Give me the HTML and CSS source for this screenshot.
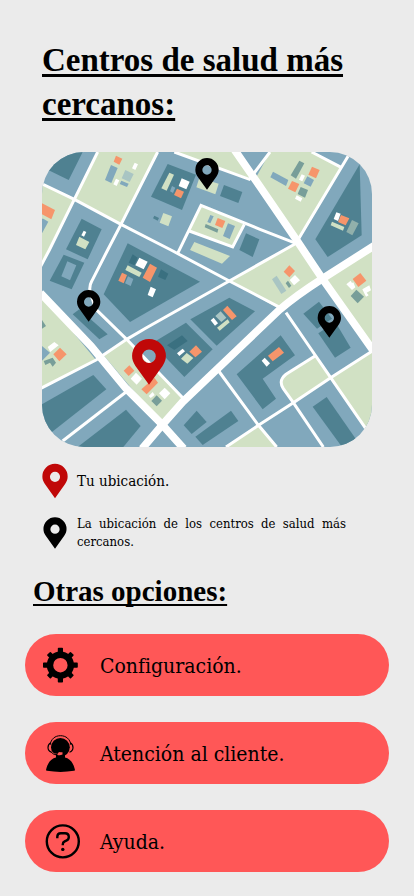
FILE: index.html
```html
<!DOCTYPE html>
<html lang="es">
<head>
<meta charset="utf-8">
<meta name="viewport" content="width=device-width, initial-scale=1">
<title>Centros de salud</title>
<link rel="stylesheet" href="styles.css">
</head>
<body>
<main class="screen">
  <section class="nearby">
    <h1 class="title">Centros de salud más cercanos:</h1>

    <svg class="map" viewBox="0 0 990 885" role="img" aria-label="Mapa de centros de salud cercanos">
      <defs>
        <path id="pin" fill-rule="evenodd" d="M0 59L-28 20C-33 12-35 7-35-1A35 35 0 0 1 35-1C35 7 33 12 28 20ZM0-14A14 14 0 1 0 0 14A14 14 0 1 0 0-14Z"/>
      </defs>
      <rect class="block" width="990" height="885"/>

      <!-- parks -->
      <g class="park">
        <path d="M167 0H347L237 217L97 142Z"/>
        <path d="M0 95L97 142L22 294L0 337Z"/>
        <path d="M397 0H580L625 80Z"/>
        <path d="M684 0H809L899 47L769 262L640 80Z"/>
        <path d="M477 160L607 217L572 285L442 237Z"/>
        <path d="M562 387L764 275L841 382L714 472Z"/>
        <path d="M841 382L990 285V600Z"/>
        <path d="M0 429L162 624L0 707Z"/>
        <path d="M182 607L254 562L422 737L360 817Z"/>
        <path d="M819 612L739 662Q706 682 724 710L754 752L866 677Z"/>
        <path d="M990 598L866 677L969 827L990 855Z"/>
        <path d="M552 885L647 817L704 885Z"/>
      </g>

      <!-- buildings -->
      <g class="dark">
        <path d="M20 55L80 84L122 0H60Z"/>
        <path d="M119 200L179 232L137 322L72 292Z"/>
        <path d="M257 274L474 389L264 510L185 427Z"/>
        <path d="M377 36L462 68L420 174L327 134Z"/>
        <path d="M546 99L601 120L589 153L534 132Z"/>
        <path d="M337 191L351 198L347 206L333 199Z"/>
        <path d="M612 244L652 262L632 315L592 294Z"/>
        <path d="M953 37L959 250L857 315L820 262Z"/>
        <path d="M65 308L127 332L89 412L23 386Z"/>
        <path d="M92 487L112 472L197 547L172 562Z"/>
        <path d="M562 437L639 478L524 581L445 502Z"/>
        <path d="M432 512L512 592L427 675L330 574Z"/>
        <path d="M831 449L870 500L825 530L784 485Z"/>
        <path d="M829 544L880 510L926 587L879 617Z"/>
        <path d="M716 550L759 610L662 680L702 740L662 772L584 667Z"/>
        <path d="M854 735L941 860L900 885L812 764Z"/>
        <path d="M154 669L193 712L27 842L0 800V757Z"/>
        <path d="M252 773L296 822L244 885H107Z"/>
        <path d="M464 776L494 810L449 846L425 820Z"/>
        <path d="M567 776L589 807L482 879L460 854Z"/>
      </g>
      <g class="deep">
        <path d="M272 307L287 317L277 340L260 332Z"/>
        <path d="M357 352L379 365L370 384L348 374Z"/>
        <path d="M420 550L437 567L397 594L375 580Z"/>
      </g>
      <g class="block">
        <path d="M207 39L227 48L208 93L189 84Z"/>
        <path d="M238 86L260 95L255 105L233 96Z"/>
        <path d="M4 200L19 209L0 244V200Z"/>
        <path d="M390 102L400 107L393 123L384 118Z"/>
        <path d="M505 189L515 193L505 214L496 210Z"/>
        <path d="M558 214L579 222L563 261L543 252Z"/>
        <path d="M796 73L816 84L806 104L785 94Z"/>
        <path d="M693 59L739 84L732 102L685 76Z"/>
        <path d="M76 328L103 340L84 385L58 373Z"/>
        <path d="M258 373L274 381L266 402L249 394Z"/>
        <path d="M0 582L24 602L0 626Z"/>
      </g>
      <g class="teal">
        <path d="M491 216L529 232L526 242L488 226Z"/>
        <path d="M772 26L787 34L762 80L746 70Z"/>
        <path d="M776 105L798 114L789 137L767 126Z"/>
        <path d="M738 386L748 401L741 408L731 394Z"/>
        <path d="M943 413L966 434L947 454L926 432Z"/>
        <path d="M5 627L32 617L42 632L32 644L24 632L10 639Z"/>
        <path d="M0 504L12 522L0 530Z"/>
        <path d="M344 730L360 746L344 763L328 747Z"/>
      </g>
      <g class="mist">
        <path d="M250 54L275 66L263 90L239 79Z"/>
        <path d="M704 371L733 416L718 426L690 382Z"/>
        <path d="M536 478L553 497L538 510L520 492Z"/>
      </g>
      <path class="sage" d="M930 204L950 214L931 250L913 240Z"/>
      <g class="park">
        <path d="M112 254L142 270L130 292L102 279Z"/>
        <path d="M382 62L396 68L374 116L358 109Z"/>
        <path d="M472 77L530 95L520 127L463 106Z"/>
        <path d="M364 183L390 193L379 223L353 212Z"/>
        <path d="M457 270L564 312L540 335L444 294Z"/>
        <path d="M870 209L907 225L903 236L866 220Z"/>
        <path d="M257 340L299 362L292 375L250 354Z"/>
        <path d="M557 502L563 511L533 536L525 527Z"/>
        <path d="M434 603L454 618L436 635L417 620Z"/>
      </g>
      <g class="orange">
        <path d="M222 11L241 20L232 38L215 29Z"/>
        <path d="M0 154L39 174L28 202L0 187Z"/>
        <path d="M405 110L426 119L417 139L396 129Z"/>
        <path d="M527 198L550 207L541 228L519 219Z"/>
        <path d="M810 44L833 54L822 79L799 68Z"/>
        <path d="M750 87L772 96L760 121L738 110Z"/>
        <path d="M897 189L922 199L911 220L888 210Z"/>
        <path d="M240 362L255 369L245 394L229 386Z"/>
        <path d="M324 335L345 347L324 390L302 377Z"/>
        <path d="M556 461L584 493L570 504L543 474Z"/>
        <path d="M462 580L480 599L460 616L442 599Z"/>
        <path d="M742 340L759 357L742 376L725 359Z"/>
        <path d="M955 363L973 386L949 405L932 381Z"/>
        <path d="M711 585L726 602L692 628L678 611Z"/>
        <path d="M54 587L74 607L52 628L34 607Z"/>
        <path d="M262 640L277 656L260 672L245 656Z"/>
        <path d="M337 677L348 692L314 727L298 712Z"/>
      </g>
      <g class="white">
        <path d="M278 32L288 37L280 54L270 49Z"/>
        <path d="M222 80L232 85L224 102L214 97Z"/>
        <path d="M125 236L133 240L126 254L118 250Z"/>
        <path d="M419 79L443 89L433 112L410 102Z"/>
        <path d="M779 67L789 71L781 88L771 83Z"/>
        <path d="M764 130L781 139L776 149L759 140Z"/>
        <path d="M883 181L896 185L888 207L875 201Z"/>
        <path d="M292 317L317 329L305 352L280 340Z"/>
        <path d="M326 404L342 412L332 436L317 429Z"/>
        <path d="M515 497L528 514L519 521L506 505Z"/>
        <path d="M422 590L429 598L412 612L405 604Z"/>
        <path d="M759 369L774 385L756 400L743 384Z"/>
        <path d="M926 386L930 393L934 391L940 406L930 414L913 397Z"/>
        <path d="M982 400L987 415L974 422L980 430L972 434L961 412Z"/>
        <path d="M668 617L684 634L674 644L659 626Z"/>
        <path d="M37 570L50 580L32 594L25 600L17 585Z"/>
        <path d="M282 662L300 680L284 698L266 680Z"/>
        <path d="M368 707L385 724L368 742L351 724Z"/>
        <path d="M332 720L338 729L326 738L320 732Z"/>
      </g>

      <!-- streets -->
      <g class="street">
        <path d="M-5 93L97 142L237 217L387 294L562 387L719 469"/>
        <path d="M167 0L97 142L22 294L-5 345"/>
        <path d="M347 0L237 217L197 294L149 388Q138 408 148 432L162 472L254 562L422 737"/>
        <path d="M397 0L622 82L684 0"/>
        <path d="M407 304L442 232L477 160L654 232L764 275"/>
        <path d="M442 237L572 285L607 217"/>
        <path d="M-5 710L162 624L254 562L312 528L562 387L654 335L764 273"/>
        <path d="M62 867L252 720"/>
        <path d="M732 482L809 594L866 677L975 835"/>
        <path d="M990 598L866 677L754 752L654 817L552 885"/>
        <path d="M530 657L647 817L704 885"/>
        <path d="M819 612L739 662Q706 682 724 710L754 752L844 885"/>
        <path d="M809 0L899 47M924 3L769 262"/>
      </g>
      <g class="avenue">
        <path d="M578-6L654 104L769 272L841 380L995 598"/>
        <path d="M1000 279L841 380Q760 432 714 472L654 529L592 588L422 750L360 820L300 890"/>
        <path d="M-5 423L147 582L252 709L360 817L425 890"/>
      </g>

      <!-- markers -->
      <use href="#pin" transform="translate(495 54)"/>
      <use href="#pin" transform="translate(140 450)"/>
      <use href="#pin" transform="translate(862 498)"/>
      <use class="here" href="#pin" transform="translate(321 613) scale(1.45)"/>
    </svg>

    <ul class="legend">
      <li class="legend-item">
        <svg class="legend-pin here" viewBox="-36 -37 72 97" aria-hidden="true"><use href="#pin"/></svg>
        <span class="legend-main">Tu ubicación.</span>
      </li>
      <li class="legend-item">
        <svg class="legend-pin small" viewBox="-36 -37 72 97" aria-hidden="true"><use href="#pin"/></svg>
        <span class="legend-note">La ubicación de los centros de salud más cercanos.</span>
      </li>
    </ul>
  </section>

  <section class="options">
    <h2 class="subtitle">Otras opciones:</h2>
    <nav class="menu">
      <button class="option" type="button">
        <svg class="icon" viewBox="0 0 40 40" aria-hidden="true">
          <g transform="translate(19.4 20.2)">
            <circle r="10.4" fill="none" stroke="#000" stroke-width="6.4"/>
            <path id="teeth" d="M-2.6-12V-16.6Q-2.6-17.4-1.8-17.4H1.8Q2.6-17.4 2.6-16.6V-12ZM-2.6 12V16.6Q-2.6 17.4-1.8 17.4H1.8Q2.6 17.4 2.6 16.6V12ZM-12-2.6H-16.6Q-17.4-2.6-17.4-1.8V1.8Q-17.4 2.6-16.6 2.6H-12ZM12-2.6H16.6Q17.4-2.6 17.4-1.8V1.8Q17.4 2.6 16.6 2.6H12Z"/>
            <use href="#teeth" transform="rotate(45) scale(.96)"/>
          </g>
        </svg>
        <span class="option-label">Configuración.</span>
      </button>
      <button class="option" type="button">
        <svg class="icon" viewBox="0 0 40 40" aria-hidden="true">
          <circle cx="19.4" cy="14.3" r="9.4"/>
          <path d="M15 21H24V24.5C29 25.5 32.5 30 34 37Q34 37.6 33 37.8Q19.5 40 6 37.8Q5 37.6 5 37C6.5 30 10 25.5 15 24.5Z"/>
          <path d="M9 12C10 6 14 2.7 19.5 2.7S29 6 30 12" fill="none" stroke="#000" stroke-width="1"/>
          <path d="M10 9.8Q7 11 7 14.6T10.5 19.3M29 9.8Q32 11 32 14.6T28.5 19.3" fill="none" stroke="#000" stroke-width="1.2"/>
          <path d="M11 18.5Q13 21.3 17 20.7Q16.5 19.5 18.5 19Q20.5 19.6 21.5 19.2V21.5Q19 22.8 16.5 22Q12.5 22 10.5 19Z" fill="#ff5757"/>
          <path d="M9.5 18.5Q12 22 16.5 21.7" fill="none" stroke="#000" stroke-width="1"/>
        </svg>
        <span class="option-label">Atención al cliente.</span>
      </button>
      <button class="option" type="button">
        <svg class="icon" viewBox="0 0 40 40" aria-hidden="true">
          <g fill="none" stroke="#000" stroke-width="2.4">
            <circle cx="21.8" cy="20.4" r="16"/>
            <path d="M16.3 17.2V15.7Q16.3 12.2 19.8 12.2H24Q27.8 12.2 27.8 16Q27.8 18.6 25.3 19.6L23.7 20.3Q21.8 21.2 21.8 23.2V24.3"/>
          </g>
          <circle cx="21.8" cy="28.4" r="1.7"/>
        </svg>
        <span class="option-label">Ayuda.</span>
      </button>
    </nav>
  </section>
</main>
</body>
</html>
```
FILE: styles.css
```css
* {
  box-sizing: border-box;
}

body {
  margin: 0;
  background: #ebebeb;
  color: #000;
  font-family: "DejaVu Serif Condensed", "DejaVu Serif", serif;
}

.screen {
  padding: 38px 25px 24px;
}

.nearby {
  padding: 0 17px;
}

.title,
.subtitle {
  margin: 0;
  font-family: "Liberation Serif", serif;
  font-weight: 700;
  text-decoration: underline;
  text-decoration-thickness: 3px;
  text-underline-offset: 3px;
  text-decoration-skip-ink: none;
}

.title {
  font-size: 33px;
  line-height: 44px;
}

.subtitle {
  padding-left: 8px;
  font-size: 29px;
  line-height: 36px;
  text-decoration-thickness: 2px;
}

.map {
  display: block;
  width: 100%;
  margin-top: 26px;
  border-radius: 42px;
}

.block { fill: #81a8bc; }
.park { fill: #d1e1c4; }
.dark { fill: #4f8191; }
.deep { fill: #3a7080; }
.teal { fill: #789e99; }
.mist { fill: #a9c5c3; }
.sage { fill: #91b0ab; }
.orange { fill: #f6956b; }
.white { fill: #fff; }
.here { fill: #c00808; }

.street,
.avenue {
  fill: none;
  stroke: #fff;
}

.street { stroke-width: 9px; }
.avenue { stroke-width: 23px; }

.legend {
  display: grid;
  gap: 16px;
  margin: 16px 0 0;
  padding: 0;
  list-style: none;
}

.legend-item {
  display: grid;
  grid-template-columns: 26px 1fr;
  align-items: center;
  column-gap: 9px;
  padding-right: 26px;
}

.legend-pin {
  width: 26px;
  height: 36px;
  justify-self: center;
}

.legend-pin.small {
  width: 24px;
  height: 32px;
}

.legend-main {
  font-size: 15px;
  line-height: 20px;
}

.legend-note {
  font-size: 13px;
  line-height: 18px;
  text-align: justify;
}

.options {
  margin-top: 22px;
}

.menu {
  display: grid;
  gap: 26px;
  margin-top: 25px;
}

.option {
  display: flex;
  align-items: center;
  gap: 19px;
  width: 100%;
  height: 62px;
  padding: 0 16px;
  border: 0;
  border-radius: 31px;
  background: #ff5757;
  color: #000;
  font: inherit;
  font-size: 21px;
  text-align: left;
  cursor: pointer;
}

.option-label {
  padding-top: 2px;
}

.icon {
  flex: none;
  width: 40px;
  height: 40px;
}
```
